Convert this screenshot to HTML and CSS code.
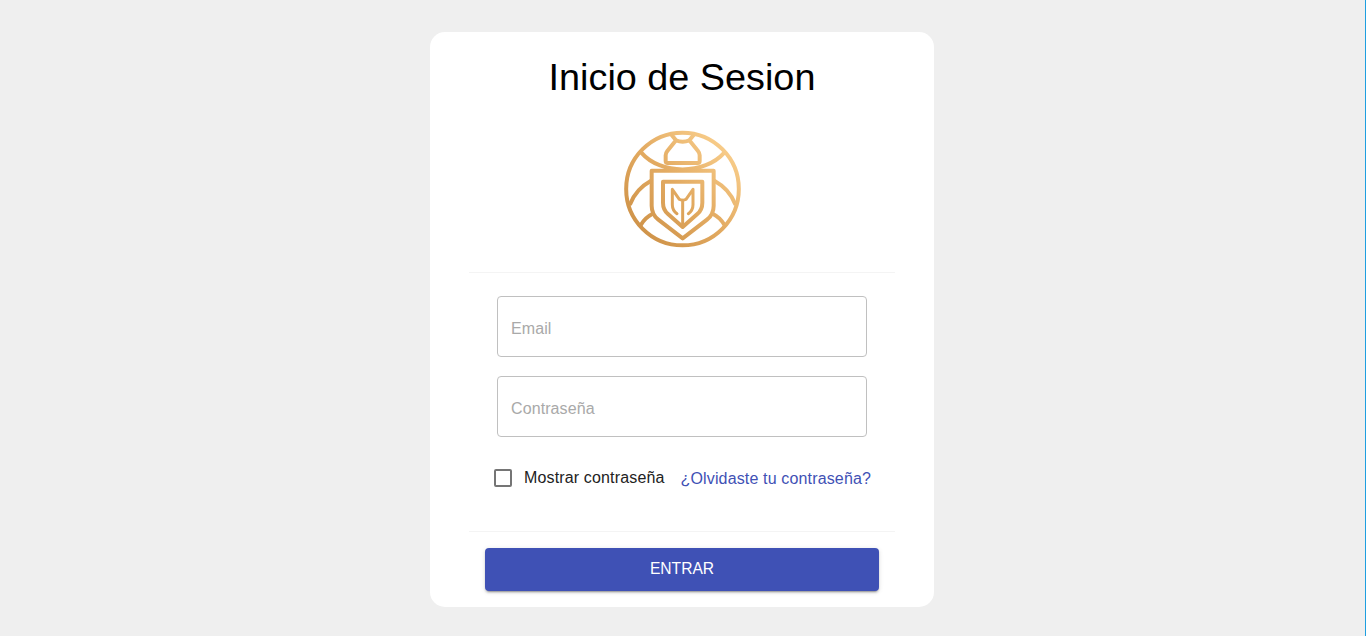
FILE: index.html
```html
<!DOCTYPE html>
<html lang="es">
<head>
<meta charset="utf-8">
<title>Inicio de Sesion</title>
<link rel="stylesheet" href="styles.css">
</head>
<body>
<main class="card">
  <h1 class="title">Inicio de Sesion</h1>
  <svg class="logo" viewBox="0 0 420 408" fill="none" stroke="url(#gold)" stroke-width="12" stroke-linejoin="round" stroke-linecap="round">
    <defs>
      <linearGradient id="gold" gradientUnits="userSpaceOnUse" x1="90" y1="330" x2="335" y2="85">
        <stop offset="0" stop-color="#d0944a"/>
        <stop offset=".5" stop-color="#e3ab62"/>
        <stop offset="1" stop-color="#f7cb88"/>
      </linearGradient>
    </defs>
    <circle cx="211.500" cy="207" r="169"/>
    <path d="M88 98C145 165 278 165 337 98"/>
    <path d="M179 45L192 61L166 93Q161 99 161 106V123Q161 129 167 129H257Q263 129 263 123V106Q263 99 258 93L232 61L245 45M192 61Q212 69 232 61"/>
    <path d="M119 152H305V257Q305 283 285 299L212 355L139 299Q119 283 119 257Z"/>
    <path d="M153 185H271V248Q271 269 256 282L212 321L168 282Q153 269 153 248Z"/>
    <path d="M212 319V241M195 281Q181 271 181 254V208L202 238L212 241L222 238L243 208V254Q243 271 229 281" stroke-width="9"/>
    <path d="M117 182Q72 207 55 251M307 182Q352 207 369 251M87 314Q100 292 122 281M337 314Q324 292 302 281"/>
  </svg>
  <section class="form">
    <label class="field"><input type="text" placeholder="Email"></label>
    <label class="field"><input type="password" placeholder="Contraseña"></label>
    <div class="options">
      <label class="show"><input class="check" type="checkbox"><span>Mostrar contraseña</span></label>
      <a class="forgot">¿Olvidaste tu contraseña?</a>
    </div>
  </section>
  <button class="submit" type="button">ENTRAR</button>
</main>
</body>
</html>
```
FILE: styles.css
```css
* { box-sizing: border-box; }
body {
  margin: 0;
  height: 636px;
  padding-top: 32px;
  background: #efefef;
  font-family: "Liberation Sans", Arial, sans-serif;
  font-size: 16px;
  overflow: hidden;
  border-right: 1px solid #1e9fe0;
}
.card {
  width: 504px;
  height: 575px;
  margin-left: 430px;
  padding: 22px 39px 16px;
  display: flex;
  flex-direction: column;
  align-items: center;
  background: #fff;
  border-radius: 15px;
}
.title {
  margin: 0;
  font-size: 37.8px;
  line-height: 46px;
  font-weight: 400;
  color: #000;
}
.logo {
  width: 140px;
  height: 136px;
  margin-top: 20px;
}
.form {
  width: 426px;
  height: 260px;
  margin-top: 16px;
  padding: 23px 20px 0 24px;
  border: solid #f4f4f4;
  border-width: 1px 0;
}
.field {
  display: block;
  width: 370px;
  height: 61px;
  margin: 0 0 19px 4px;
  border: 1px solid #c0c0c0;
  border-radius: 4px;
}
.field input {
  width: 100%;
  height: 100%;
  padding: 4px 13px 0;
  border: 0;
  background: none;
  outline: 0;
  font: inherit;
  letter-spacing: .1px;
}
.field input::placeholder { color: #a9a9a9; opacity: 1; }
.options {
  display: flex;
  align-items: center;
  padding-top: 13px;
  letter-spacing: .15px;
}
.show { display: flex; align-items: flex-start; color: #222; }
.show span { line-height: 18px; padding-bottom: 1px; }
.check {
  appearance: none;
  width: 18px;
  height: 18px;
  margin: 0 12px 0 1px;
  border: 2px solid #757575;
  border-radius: 2px;
}
.forgot { margin-left: 16px; padding-top: 1px; color: #3f51b5; white-space: nowrap; }
.submit {
  width: 394px;
  height: 43px;
  margin-top: 16px;
  padding: 0 0 2px;
  border: 0;
  border-radius: 4px;
  background: #3f51b5;
  color: #fff;
  font: 500 15.6px "Liberation Sans", Arial, sans-serif;
  letter-spacing: 0;
  box-shadow: 0 3px 1px -2px rgba(0,0,0,.2), 0 2px 2px rgba(0,0,0,.14), 0 1px 5px rgba(0,0,0,.12);
}
```
